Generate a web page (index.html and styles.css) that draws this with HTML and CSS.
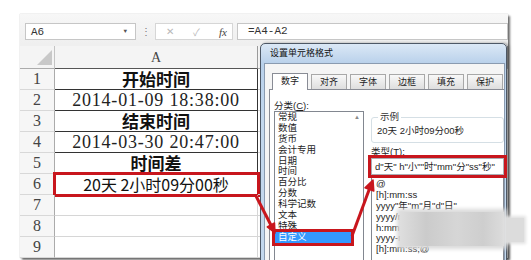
FILE: index.html
```html
<!DOCTYPE html>
<html lang="zh-CN">
<head>
  <meta charset="UTF-8">
  <title>设置单元格格式</title>
  <link rel="stylesheet" href="styles.css">
</head>
<body>
  <div class="desk">
    <div class="excel">
      <div class="formula-bar">
        <div class="name-box"><span>A6</span><span class="caret">▼</span></div>
        <span class="grip">⋮</span>
        <div class="fx-box"><span>✕</span><span>✓</span><span class="fx">fx</span></div>
        <div class="formula">=A4-A2</div>
      </div>

      <div class="sheet">
        <div class="corner"><span class="tri"></span></div>
        <div class="col-head">A</div>
        <div class="col-head next"></div>

        <div class="row-head">1</div>
        <div class="cell boxed title">开始时间</div>
        <div class="cell"></div>

        <div class="row-head">2</div>
        <div class="cell boxed date">2014-01-09 18:38:00</div>
        <div class="cell"></div>

        <div class="row-head">3</div>
        <div class="cell boxed title">结束时间</div>
        <div class="cell"></div>

        <div class="row-head">4</div>
        <div class="cell boxed date">2014-03-30 20:47:00</div>
        <div class="cell"></div>

        <div class="row-head">5</div>
        <div class="cell boxed title">时间差</div>
        <div class="cell"></div>

        <div class="row-head">6</div>
        <div class="cell marked result">20天 2小时09分00秒</div>
        <div class="cell"></div>

        <div class="row-head">7</div>
        <div class="cell"></div>
        <div class="cell"></div>

        <div class="row-head">8</div>
        <div class="cell"></div>
        <div class="cell"></div>

        <div class="row-head">9</div>
        <div class="cell"></div>
        <div class="cell"></div>
      </div>
    </div>

    <div class="dialog">
      <div class="dialog-title">设置单元格格式</div>
      <div class="client">
        <div class="tabs">
          <div class="tab active">数字</div>
          <div class="tab">对齐</div>
          <div class="tab">字体</div>
          <div class="tab">边框</div>
          <div class="tab">填充</div>
          <div class="tab">保护</div>
        </div>
        <div class="panel">
          <div class="left-col">
            <div class="label">分类(<u>C</u>):</div>
            <div class="cat-list">
              <div class="cat-items">
                <div>常规</div>
                <div>数值</div>
                <div>货币</div>
                <div>会计专用</div>
                <div>日期</div>
                <div>时间</div>
                <div>百分比</div>
                <div>分数</div>
                <div>科学记数</div>
                <div>文本</div>
                <div>特殊</div>
                <div class="sel">自定义</div>
              </div>
              <div class="scroll">▲</div>
            </div>
          </div>
          <div class="right-col">
            <fieldset class="sample">
              <legend>示例</legend>
              <div class="sample-text">20天 2小时09分00秒</div>
            </fieldset>
            <div class="label type-label">类型(<u>T</u>):</div>
            <div class="type-input">d"天" h"小""时"mm"分"ss"秒"</div>
            <div class="fmt-list">
              <div>@</div>
              <div>[h]:mm:ss</div>
              <div>yyyy"年"m"月"d"日"</div>
              <div>yyyy/m/d h:mm</div>
              <div>h:mm AM/PM</div>
              <div>yyyy-m-d h:mm</div>
              <div>[h]:mm:ss;@</div>
            </div>
          </div>
        </div>
      </div>
    </div>

    <div class="mosaic"></div>
    <div class="mosaic tail"></div>

    <svg class="arrows" width="531" height="260" viewBox="0 0 531 260">
      <line x1="256" y1="196" x2="270.9" y2="225" stroke="#c8161d" stroke-width="3"/>
      <polygon points="275,233 274.5,223 267.3,226.8" fill="#c8161d" stroke="#c8161d" stroke-width="1.5" stroke-linejoin="round"/>
      <line x1="352" y1="236" x2="369.3" y2="189.3" stroke="#c8161d" stroke-width="3"/>
      <polygon points="373,180 373.8,191 365,187.7" fill="#c8161d" stroke="#c8161d" stroke-width="1.5" stroke-linejoin="round"/>
    </svg>
  </div>
</body>
</html>
```

FILE: styles.css
```css
* {
  box-sizing: border-box;
}

body {
  margin: 0;
  background: #fff;
  font-family: "Liberation Sans", "Noto Sans CJK SC", sans-serif;
}

.desk {
  position: relative;
  width: 531px;
  height: 260px;
  overflow: hidden;
  padding: 14px 0 0 20px;
}

/* Excel window */
.excel {
  width: 488px;
  height: 244px;
  background: linear-gradient(#f7f7f7, #efefef 30px);
  box-shadow: 0 0 1px rgba(0, 0, 0, 0.3), 2px 2px 2px rgba(0, 0, 0, 0.55);
  padding-top: 9px;
}

.formula-bar {
  display: flex;
  height: 17px;
  margin-left: 5px;
}

.name-box {
  width: 111px;
  background: #fff;
  border: 1px solid #c6c6c6;
  display: flex;
  align-items: center;
  justify-content: space-between;
  padding: 0 8px 0 5px;
  font: 11px "Liberation Mono", monospace;
  color: #333;
}

.caret {
  font-size: 6px;
  color: #555;
}

.grip {
  width: 19px;
  text-align: center;
  color: #777;
  font-size: 10px;
  line-height: 17px;
}

.fx-box {
  width: 78px;
  border: 1px solid #d6d6d6;
  background: #fff;
  display: flex;
  align-items: center;
  justify-content: space-between;
  padding: 0 5px 0 10px;
  color: #b8b8b8;
  font-size: 10px;
}

.fx {
  font: italic 11px "Liberation Serif", serif;
  color: #444;
}

.formula {
  flex: 1;
  margin-left: 4px;
  background: #fff;
  border: 1px solid #c6c6c6;
  padding-left: 10px;
  font: 11px "Liberation Mono", monospace;
  line-height: 15px;
  color: #333;
}

/* Sheet grid */
.sheet {
  margin-top: 6px;
  display: grid;
  grid-template-columns: 35px 203px 1fr;
  grid-template-rows: 23px repeat(9, 21px);
  background: #fff;
}

.corner {
  background: #f4f4f4;
  border-right: 1px solid #c4c4c4;
  border-bottom: 1px solid #ababab;
  display: flex;
  align-items: flex-end;
  justify-content: flex-end;
  padding: 0 2px 3px 0;
}

.tri {
  width: 0;
  height: 0;
  border-left: 15px solid transparent;
  border-bottom: 15px solid #c8c8c8;
}

.col-head {
  background: #f4f4f4;
  border-right: 1px solid #9a9a9a;
  border-bottom: 1px solid #555;
  text-align: center;
  padding-top: 4px;
  font: 14px "Liberation Serif", serif;
  color: #444;
}

.col-head.next {
  border-bottom-color: #ababab;
}

.row-head {
  background: #f6f6f6;
  border-right: 1px solid #ababab;
  border-bottom: 1px solid #d8d8d8;
  display: flex;
  align-items: center;
  justify-content: center;
  font: 16px "Liberation Serif", serif;
  color: #444;
}

.cell {
  border-right: 1px solid #d6d6d6;
  border-bottom: 1px solid #d6d6d6;
  display: flex;
  align-items: center;
  justify-content: center;
  color: #111;
  line-height: 18px;
}

.cell.boxed {
  border-right-color: #333;
  border-bottom-color: #333;
}

.title {
  font: bold 17px "Noto Sans CJK SC", sans-serif;
  line-height: 18px;
}

.date {
  font: 18px "Liberation Serif", serif;
  letter-spacing: 0.8px;
  color: #222;
}

.result {
  font: 16px "Noto Sans CJK SC", sans-serif;
  line-height: 18px;
  white-space: pre;
}

.marked {
  outline: 3px solid #c8161d;
  outline-offset: -1px;
}

/* Format cells dialog */
.dialog {
  position: absolute;
  left: 260px;
  top: 43px;
  width: 247px;
  height: 230px;
  border: 1px solid #4d5866;
  border-radius: 5px 5px 0 0;
  background: linear-gradient(180deg, #dbe8f6 0%, #b8d0ea 20px, #c3d8ee 80px);
  padding: 0 1px 0 3px;
  box-shadow: 2px 0 3px rgba(0, 0, 0, 0.35);
  font-size: 9.5px;
  color: #1e1e1e;
}

.dialog-title {
  height: 19px;
  line-height: 19px;
  padding-left: 6px;
  font-size: 9px;
  color: #111;
}

.client {
  height: 100%;
  background: #f5f5f5;
  border: 1px solid #8a9bb0;
  padding: 8px 0 0 4px;
}

.tabs {
  display: flex;
  align-items: flex-end;
  gap: 3px;
  height: 17px;
  padding-left: 3px;
}

.tab {
  width: 36px;
  height: 15px;
  border: 1px solid #a8a8a8;
  border-bottom: none;
  background: linear-gradient(#f8f8f8, #dedede);
  text-align: center;
  line-height: 14px;
  font-size: 9px;
  color: #222;
}

.tab.active {
  height: 17px;
  margin-bottom: -1px;
  background: #fff;
  border-color: #898c95;
  line-height: 15px;
  position: relative;
  z-index: 1;
}

.panel {
  height: 200px;
  background: #fff;
  border: 1px solid #898c95;
  border-right: none;
  display: flex;
  gap: 7px;
  padding: 11px 0 0 4px;
}

.label {
  line-height: 10px;
  height: 10px;
}

.left-col {
  width: 90px;
}

.cat-list {
  width: 90px;
  height: 150px;
  border: 1px solid #828790;
  display: flex;
}

.cat-items {
  flex: 1;
  line-height: 10.9px;
}

.cat-items div {
  padding-left: 3px;
  height: 10.9px;
}

.cat-items .sel {
  background: #3399ff;
  color: #fff;
  outline: 3px solid #c8161d;
}

.scroll {
  width: 12px;
  text-align: center;
  font-size: 6px;
  line-height: 11px;
  color: #8a8a8a;
}

.right-col {
  width: 133px;
}

.sample {
  margin: 11px 0 0;
  padding: 3px 0 0 5px;
  height: 31px;
  border: 1px solid #d5dfe5;
  border-radius: 3px;
}

.sample legend {
  padding: 0 2px;
  margin-left: 1px;
  line-height: 10px;
  color: #333;
}

.sample-text {
  line-height: 11px;
}

.type-label {
  margin-top: 3px;
  line-height: 11px;
  height: 11px;
}

.type-input {
  margin-top: 1px;
  height: 17px;
  border: 1px solid #abadb3;
  padding-left: 3px;
  line-height: 15px;
  outline: 3px solid #c8161d;
  white-space: pre;
}

.fmt-list {
  margin-top: 2px;
  height: 90px;
  border: 1px solid #828790;
  border-top-color: #c8161d;
  padding: 1px 0 0 4px;
  line-height: 10.9px;
}

.fmt-list div {
  height: 10.9px;
  white-space: nowrap;
}

/* blurred watermark patch */
.mosaic {
  position: absolute;
  left: 400px;
  top: 212px;
  width: 104px;
  height: 34px;
  background: linear-gradient(90deg, #dedede, #cbcbcb 25%, #d6d6d6 55%, #cecece 80%, #dcdcdc);
  box-shadow: 0 0 4px 3px #dadada;
}

.mosaic.tail {
  left: 506px;
  top: 218px;
  width: 18px;
  height: 24px;
  background: #dcdcdc;
  box-shadow: 0 0 3px 2px #e2e2e2;
}

.arrows {
  position: absolute;
  left: 0;
  top: 0;
  pointer-events: none;
}
```
